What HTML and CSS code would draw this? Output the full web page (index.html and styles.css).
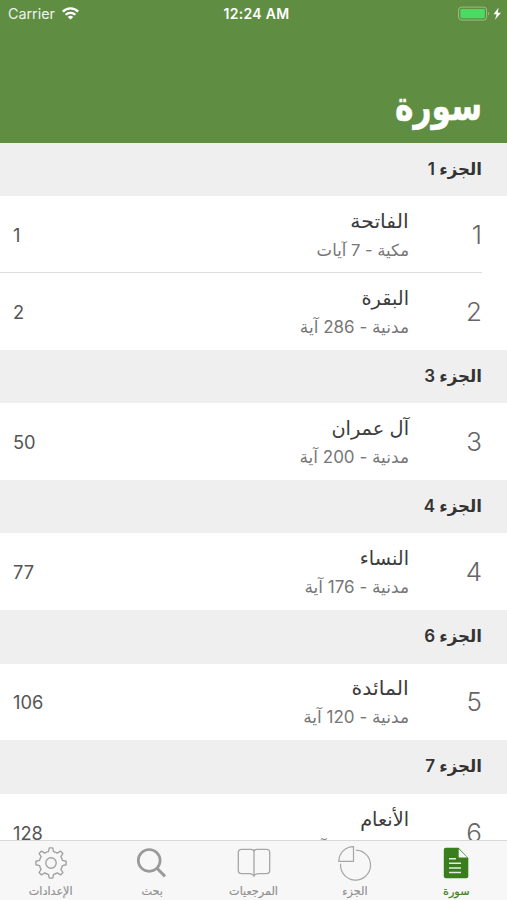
FILE: index.html
```html
<!DOCTYPE html>
<html lang="ar" dir="rtl">
<head>
<meta charset="utf-8">
<meta name="viewport" content="width=device-width">
<title>سورة</title>
<link rel="stylesheet" href="styles.css">
</head>
<body>
<div class="app">
  <header class="header">
    <div class="status" dir="ltr">
      <div class="carrier"><span>Carrier</span>
        <svg class="wifi" width="17" height="13" viewBox="0 0 17 13" fill="none" stroke="#fff" stroke-width="2.3"><path d="M.8 4.6A10.8 10.8 0 0 1 16.2 4.6"/><path d="M3.6 7.8A7 7 0 0 1 13.4 7.8"/><path d="M8.5 12.6L5.7 9.9Q8.5 7.8 11.3 9.9Z" fill="#fff" stroke="none"/></svg>
      </div>
      <div class="time">12:24 AM</div>
      <div class="power">
        <svg width="44" height="16" viewBox="0 0 44 16"><rect x=".6" y="1.1" width="28" height="13" rx="3" fill="none" stroke="#9bbf86"/><rect x="2.4" y="2.9" width="24.4" height="9.4" rx="1.4" fill="#4cd964"/><path d="M30 5.5Q32 7.5 30 9.5Z" fill="#9bbf86"/><path d="M40.6 1.6L35.6 8.3H38.6L37 13.7L43 6.7H39.7Z" fill="#fff"/></svg>
      </div>
    </div>
    <h1 class="title">سورة</h1>
  </header>
  <main class="list">
    <h2 class="section"><span>الجزء</span> <b>1</b></h2>
    <div class="row divided"><div class="num">1</div><div class="info"><div class="name wide">الفاتحة</div><div class="meta short"><span>مكية</span> - 7 <span>آيات</span></div></div><div class="page">1</div></div>
    <div class="row"><div class="num">2</div><div class="info"><div class="name">البقرة</div><div class="meta"><span>مدنية</span> - 286 <span>آية</span></div></div><div class="page">2</div></div>
    <h2 class="section"><span>الجزء</span> <b>3</b></h2>
    <div class="row"><div class="num">3</div><div class="info"><div class="name">آل عمران</div><div class="meta"><span>مدنية</span> - 200 <span>آية</span></div></div><div class="page">50</div></div>
    <h2 class="section"><span>الجزء</span> <b>4</b></h2>
    <div class="row"><div class="num">4</div><div class="info"><div class="name">النساء</div><div class="meta"><span>مدنية</span> - 176 <span>آية</span></div></div><div class="page">77</div></div>
    <h2 class="section"><span>الجزء</span> <b>6</b></h2>
    <div class="row"><div class="num">5</div><div class="info"><div class="name wide">المائدة</div><div class="meta"><span>مدنية</span> - 120 <span>آية</span></div></div><div class="page">106</div></div>
    <h2 class="section"><span>الجزء</span> <b>7</b></h2>
    <div class="row"><div class="num">6</div><div class="info"><div class="name">الأنعام</div><div class="meta"><span>مكية</span> - 165 <span>آية</span></div></div><div class="page">128</div></div>
  </main>
  <nav class="tabs">
    <a class="tab active"><svg width="36" height="36" viewBox="0 0 36 36"><path d="M7.8 2.8H20.5L30.3 13V31.2Q30.3 33.2 28.3 33.2H7.8Q5.8 33.2 5.8 31.2V4.8Q5.8 2.8 7.8 2.8Z" fill="#3a7d1c"/><path d="M20.7 4V12.6H29.3Z" fill="#f7f7f7"/><path d="M11 13.7H18M11 18.3H23M11 22.9H23M11 27.5H23" stroke="#e4eedf" stroke-width="1.5"/></svg><span>سورة</span></a>
    <a class="tab"><svg width="36" height="36" viewBox="0 0 36 36" fill="none" stroke="#a6a6a6" stroke-width="1.2"><path d="M16.5 1.6V16.3H1.8A14.8 14.8 0 0 1 16.5 1.6Z"/><path d="M19 5.1A15 15 0 1 1 3.6 18.8"/></svg><span>الجزء</span></a>
    <a class="tab"><svg width="36" height="36" viewBox="0 0 36 36" fill="none" stroke="#a6a6a6" stroke-width="1.3"><path d="M18 7Q18 4.3 15 4.3H5.5Q2.3 4.3 2.3 7.5V25.5Q2.3 28.6 5.5 28.6H13Q17 28.6 18 31Q19 28.6 23 28.6H30.5Q33.7 28.6 33.7 25.5V7.5Q33.7 4.3 30.5 4.3H21Q18 4.3 18 7Z"/><path d="M18 7V31"/></svg><span>المرجعيات</span></a>
    <a class="tab"><svg width="36" height="36" viewBox="0 0 36 36" fill="none" stroke="#9a9a9a" stroke-width="2.7"><circle cx="15.2" cy="15.4" r="10.9"/><path d="M23 23.2L31 31.4" stroke-width="3"/></svg><span>بحث</span></a>
    <a class="tab"><svg width="36" height="36" viewBox="0 0 36 36" fill="none" stroke="#a2a2a2" stroke-width="1.4" stroke-linejoin="round"><circle cx="18" cy="18" r="5.2"/><path d="M15.4 6.6L16.3 2.9H19.7L20.6 6.6Q23 7.2 24.3 8.1L27.5 6.1L29.9 8.5L27.9 11.7Q29 13.4 29.4 15.4L33.1 16.3V19.7L29.4 20.6Q29 22.6 27.9 24.3L29.9 27.5L27.5 29.9L24.3 27.9Q22.6 29 20.6 29.4L19.7 33.1H16.3L15.4 29.4Q13.4 29 11.7 27.9L8.5 29.9L6.1 27.5L8.1 24.3Q7 22.6 6.6 20.6L2.9 19.7V16.3L6.6 15.4Q7 13.4 8.1 11.7L6.1 8.5L8.5 6.1L11.7 8.1Q13.4 7 15.4 6.6Z"/></svg><span>الإعدادات</span></a>
  </nav>
</div>
</body>
</html>
```
FILE: styles.css
```css
* { box-sizing: border-box; }
body { margin: 0; background: #fff; font-family: Inter, "DejaVu Sans", sans-serif; color: #3c3c3c; }
.app { width: 507px; height: 900px; display: flex; flex-direction: column; overflow: hidden; }
.header { flex: none; height: 142.8px; background: #5f8e42; color: #fff; display: flex; flex-direction: column; justify-content: space-between; }
.status { height: 27px; display: grid; grid-template-columns: 1fr auto 1fr; align-items: center; padding: 0 5px 0 8px; font-size: 14px; }
.carrier { display: flex; align-items: center; gap: 7px; font-size: 14.3px; color: #edf3e9; }
.time { font-weight: 600; font-size: 14px; letter-spacing: .3px; padding-left: 3px; }
.power { display: flex; justify-content: flex-end; }
.title { margin: 0 25px 9px 0; align-self: flex-start; font: bold 40px/56px "DejaVu Sans", sans-serif; transform: scaleX(.785); transform-origin: right; -webkit-text-stroke: .5px #fff; }
.list { flex: 1; min-height: 0; overflow: hidden; }
.section { margin: 0; height: 53.6px; line-height: 53px; padding: 0 25px; background: #efefef; font-size: 17px; font-weight: 600; color: #333; }
.section span { font-size: 16.6px; }
.section b { font-weight: 600; }
.row { height: 76.6px; display: flex; align-items: center; padding: 0 25px 0 13px; position: relative; }
.divided::after { content: ""; position: absolute; left: 0; right: 25px; bottom: 0; height: 1px; background: #dedede; }
.num { width: 73px; font-size: 26px; font-weight: 300; color: #666; }
.info { flex: 1; padding-top: 3px; }
.name { font-size: 19.3px; line-height: 28px; }
.name.wide { transform: scaleX(1.06); transform-origin: right; }
.meta { font-size: 17px; line-height: 30px; color: #777; }
.meta.short { font-size: 16.5px; }
.page { font-size: 18.3px; color: #555; padding-top: 1px; }
.tabs { flex: none; height: 60px; display: grid; grid-template-columns: repeat(5, 1fr); background: #f7f7f7; border-top: 1px solid #d8d8d8; }
.tab { display: flex; flex-direction: column; align-items: center; padding-top: 4px; color: #929292; }
.tab svg { flex: none; }
.tab span { font: 11.2px/21px "DejaVu Sans", sans-serif; -webkit-text-stroke: .2px currentColor; }
.tab.active { color: #3a7d1c; }
```
